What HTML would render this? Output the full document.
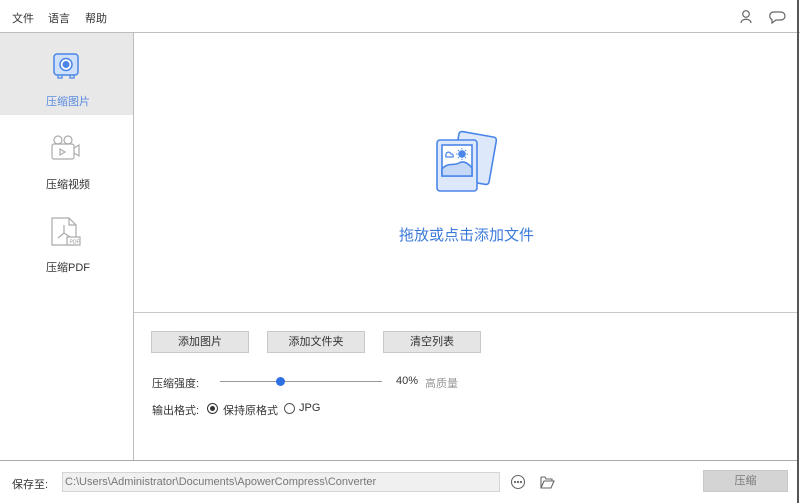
<!DOCTYPE html>
<html><head><meta charset="utf-8"><style>
*{margin:0;padding:0;box-sizing:border-box}
body{width:800px;height:503px;background:#fff;font-family:"Liberation Sans","Noto Sans CJK SC",sans-serif;font-size:11px;color:#333;position:relative;overflow:hidden}
.a{position:absolute}
.btn{position:absolute;background:#e5e5e5;border:1px solid #c8c8c8;text-align:center;line-height:20px;font-size:11px;color:#333}
</style></head><body>
<div class="a" style="left:12px;top:10px">文件</div>
<div class="a" style="left:48px;top:10px">语言</div>
<div class="a" style="left:85px;top:10px">帮助</div>
<svg class="a" style="left:738px;top:9px" width="50" height="16" viewBox="0 0 50 16" fill="none" stroke="#666" stroke-width="1.2">
<circle cx="8" cy="5" r="3.3"/><path d="M3 14 C3 9 13 9 13 14"/>
<path d="M35 3 h8 a4 4 0 0 1 0 8 h-5 l-4 3 v-3.5 a4 4 0 0 1 1-7.5z"/></svg>
<div class="a" style="left:0;top:32px;width:800px;height:1px;background:#bdbdbd"></div>
<div class="a" style="left:797px;top:0;width:2px;height:503px;background:#555"></div>
<div class="a" style="left:133px;top:33px;width:1px;height:427px;background:#bdbdbd"></div>
<div class="a" style="left:0;top:33px;width:133px;height:82px;background:#e8e8e8"></div>
<svg class="a" style="left:52px;top:52px" width="28" height="28" viewBox="0 0 28 28"><rect x="2" y="2" width="24" height="21" rx="3" fill="#cfe0fa" stroke="#4a86e8" stroke-width="1.5"/><circle cx="14" cy="12.5" r="6" fill="#fff" stroke="#4a86e8" stroke-width="1.5"/><circle cx="14" cy="12.5" r="3.5" fill="#4a86e8"/><path d="M6 23v3h4v-3M18 23v3h4v-3" stroke="#4a86e8" stroke-width="1.3" fill="none"/></svg>
<div class="a" style="left:46px;top:93px;color:#5b8be0">压缩图片</div>
<svg class="a" style="left:50px;top:134px" width="32" height="28" viewBox="0 0 32 28" fill="none" stroke="#aaa" stroke-width="1.2"><circle cx="8" cy="6" r="4"/><circle cx="18" cy="6" r="4"/><rect x="2" y="10" width="22" height="15" rx="2"/><path d="M24 14l5-3v11l-5-3"/><path d="M10 15v6l5-3z"/></svg>
<div class="a" style="left:46px;top:176px">压缩视频</div>
<svg class="a" style="left:50px;top:216px" width="32" height="32" viewBox="0 0 32 32" fill="none" stroke="#aaa" stroke-width="1.2"><path d="M2 2h17l7 7v20h-24z"/><path d="M19 2v7h7"/><path d="M14 9v8l-6 5M14 17l6 4"/><rect x="17" y="21" width="13" height="8" fill="#fff"/><text x="19.5" y="27.5" font-size="5" fill="#999" stroke="none" font-family="Liberation Sans">PDF</text></svg>
<div class="a" style="left:46px;top:259px">压缩PDF</div>
<svg class="a" style="left:433px;top:128px" width="68" height="68" viewBox="0 0 68 68" fill="none" stroke="#4a86e8" stroke-width="1.6">
<rect x="22" y="6" width="38" height="48" rx="3" fill="#dde8fb" transform="rotate(10 41 30)"/>
<rect x="4" y="12" width="40" height="51" rx="3" fill="#dde8fb"/>
<rect x="9" y="17" width="30" height="31" fill="#fff"/>
<path d="M9 41c6-7 12-3 17-6s10 1 13 5v8h-30z" fill="#c5d8f8"/>
<circle cx="29" cy="26" r="3" fill="#4a86e8"/>
<path d="M29 20v1.5M29 30.5v1.5M23 26h1.5M33.5 26h1.5M25 22l1 1M32 29l1 1M33 22l-1 1M25 30l1-1" stroke-width="1"/>
<path d="M13 29h7a2 2 0 0 0-2-3 2.5 2.5 0 0 0-5 1.5 1 1 0 0 0 0 1.5z" stroke-width="1.2"/></svg>
<div class="a" style="left:399px;top:224px;font-size:15px;color:#3d7bd9">拖放或点击添加文件</div>
<div class="a" style="left:134px;top:312px;width:663px;height:1px;background:#c8c8c8"></div>
<div class="btn" style="left:151px;top:331px;width:98px;height:22px">添加图片</div>
<div class="btn" style="left:267px;top:331px;width:98px;height:22px">添加文件夹</div>
<div class="btn" style="left:383px;top:331px;width:98px;height:22px">清空列表</div>
<div class="a" style="left:152px;top:375px">压缩强度:</div>
<div class="a" style="left:220px;top:381px;width:162px;height:1px;background:#999"></div>
<div class="a" style="left:276px;top:377px;width:9px;height:9px;border-radius:50%;background:#2f6fe4"></div>
<div class="a" style="left:396px;top:375px">40%</div>
<div class="a" style="left:425px;top:375px;color:#999">高质量</div>
<div class="a" style="left:152px;top:402px">输出格式:</div>
<div class="a" style="left:207px;top:403px;width:11px;height:11px;border:1px solid #333;border-radius:50%"><div style="margin:2px;width:5px;height:5px;border-radius:50%;background:#333"></div></div>
<div class="a" style="left:223px;top:402px">保持原格式</div>
<div class="a" style="left:284px;top:403px;width:11px;height:11px;border:1px solid #555;border-radius:50%"></div>
<div class="a" style="left:299px;top:402px">JPG</div>
<div class="a" style="left:0;top:460px;width:797px;height:1px;background:#aaa"></div>
<div class="a" style="left:12px;top:476px">保存至:</div>
<div class="a" style="left:62px;top:472px;width:438px;height:20px;background:#f0f0f0;border:1px solid #d5d5d5;color:#777;padding-left:2px;line-height:18px">C:\Users\Administrator\Documents\ApowerCompress\Converter</div>
<svg class="a" style="left:510px;top:474px" width="46" height="16" viewBox="0 0 46 16" fill="none" stroke="#666" stroke-width="1.1"><circle cx="8" cy="8" r="6.5"/><circle cx="5" cy="8" r=".6" fill="#666"/><circle cx="8" cy="8" r=".6" fill="#666"/><circle cx="11" cy="8" r=".6" fill="#666"/><path d="M31 3h4l1 2h6v2M31 3v11h10l3-7h-10l-3 7"/></svg>
<div class="a" style="left:703px;top:470px;width:85px;height:22px;background:#d4d4d4;border:1px solid #c8c8c8;text-align:center;line-height:20px;color:#777">压缩</div>
</body></html>
